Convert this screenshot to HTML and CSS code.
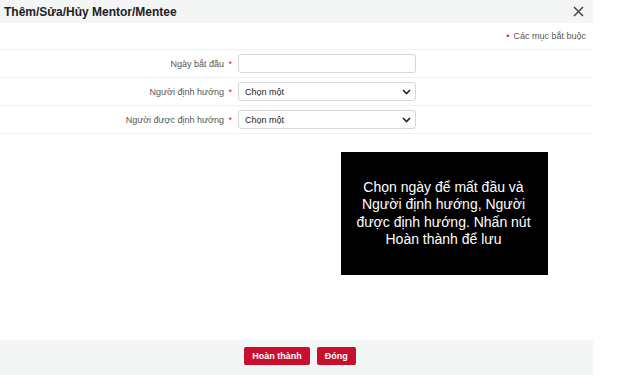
FILE: index.html
```html
<!DOCTYPE html>
<html lang="vi">
<head>
<meta charset="utf-8">
<link rel="stylesheet" href="styles.css">
</head>
<body>
<div class="modal">
  <div class="header">
    <div class="title">Thêm/Sửa/Hủy Mentor/Mentee</div>
    <svg class="close" width="11" height="11" viewBox="0 0 11 11"><path d="M1 1L10 10M10 1L1 10" stroke="#444" stroke-width="1.5"/></svg>
  </div>
  <div class="note"><span class="star">•</span> Các mục bắt buộc</div>
  <div class="rows">
    <div class="row">
      <div class="label">Ngày bắt đầu <span class="star">*</span></div>
      <div class="field input"></div>
    </div>
    <div class="row">
      <div class="label">Người định hướng <span class="star">*</span></div>
      <div class="field select"><span>Chọn một</span>
        <svg width="9" height="6" viewBox="0 0 9 6"><path d="M1 1L4.5 4.5L8 1" stroke="#222" stroke-width="1.6" fill="none"/></svg>
      </div>
    </div>
    <div class="row">
      <div class="label">Người được định hướng <span class="star">*</span></div>
      <div class="field select"><span>Chọn một</span>
        <svg width="9" height="6" viewBox="0 0 9 6"><path d="M1 1L4.5 4.5L8 1" stroke="#222" stroke-width="1.6" fill="none"/></svg>
      </div>
    </div>
  </div>
  <div class="body"></div>
  <div class="footer">
    <button class="btn">Hoàn thành</button>
    <button class="btn">Đóng</button>
  </div>
  <div class="tip">Chọn ngày để mất đầu và Người định hướng, Người được định hướng. Nhấn nút Hoàn thành để lưu</div>
</div>
</body>
</html>
```
FILE: styles.css
```css
html, body { margin: 0; padding: 0; background: #fff; }
body { font-family: "Liberation Sans", Arial, sans-serif; color: #333; }
.modal { position: relative; width: 593px; height: 375px; display: flex; flex-direction: column; }
.header { height: 23px; background: #f4f5f5; display: flex; align-items: center; justify-content: space-between; padding: 0 9px 0 4px; }
.title { font-size: 12px; font-weight: bold; color: #222; }
.close { display: block; }
.note { height: 27px; display: flex; align-items: center; justify-content: flex-end; padding-right: 7px; font-size: 9px; color: #555; border-bottom: 1px solid #efefef; box-sizing: border-box; }
.note .star { margin-right: 4px; }
.star { color: #e0162b; }
.label .star { margin-left: 2px; }
.row { height: 28px; display: flex; align-items: center; border-bottom: 1px solid #efefef; box-sizing: border-box; }
.label { width: 232px; text-align: right; font-size: 9px; color: #555; }
.field { margin-left: 6px; width: 178px; height: 19px; border: 1px solid #d6d6d6; border-radius: 3px; box-sizing: border-box; background: #fff; }
.select { display: flex; align-items: center; justify-content: space-between; padding: 0 4px 0 6px; font-size: 9px; color: #222; }
.body { flex: 1; }
.footer { height: 35px; background: #f4f5f5; display: flex; justify-content: center; align-items: flex-start; padding: 7px 0 0 7px; gap: 7px; box-sizing: border-box; }
.btn { background: #c8102e; color: #fff; border: none; border-radius: 2px; font-family: "Liberation Sans", Arial, sans-serif; font-size: 9px; font-weight: bold; height: 18px; padding: 0 8px; }
.tip { position: absolute; left: 341px; top: 152px; width: 207px; height: 123px; background: #000; color: #fff; font-size: 14px; line-height: 17.5px; text-align: center; display: flex; align-items: center; justify-content: center; padding: 0 12px 0 10px; box-sizing: border-box; }
```
